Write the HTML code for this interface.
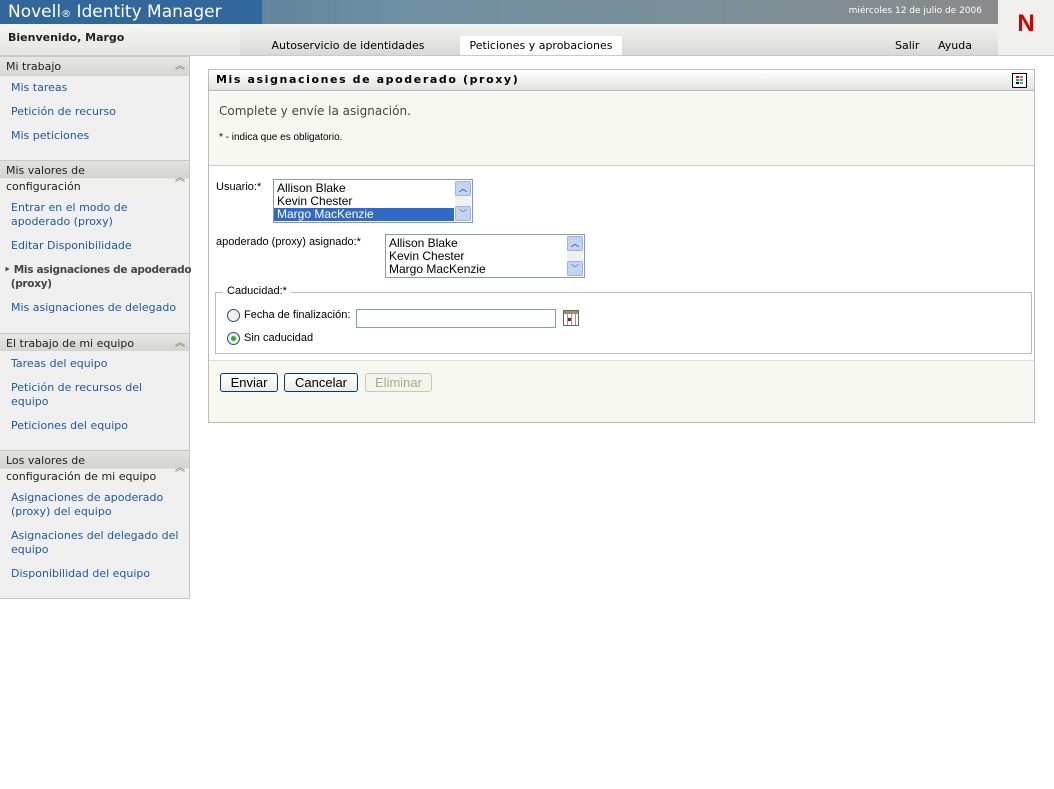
<!DOCTYPE html>
<html><head><meta charset="utf-8"><style>
*{margin:0;padding:0;box-sizing:border-box}
body{width:1054px;height:789px;background:#fff;font-family:"DejaVu Sans","Liberation Sans",sans-serif;font-size:11px;position:relative;overflow:hidden}
.abs{position:absolute}
#top{left:0;top:0;width:998px;height:24px;background:linear-gradient(90deg,#4a7090 0,#6f8fa3 40%,#7a8f99 70%,#8a8a8a 100%)}
#logo{left:0;top:0;width:262px;height:24px;background:#32679c;color:#fff;font-size:17px;padding:2px 8px;font-family:"DejaVu Sans",sans-serif}
#date{right:72px;top:6px;color:#fff;font-size:9px}
#bar{left:0;top:24px;width:998px;height:31px;background:linear-gradient(#f4f4f2,#d8d8d4)}
#nbox{left:998px;top:0;width:56px;height:55px;background:#efefed;color:#d40000;font-size:24px;font-weight:bold;text-align:center;padding-top:10px;font-family:"Liberation Sans",sans-serif}
.tab{top:36px;height:19px;font-size:11px;padding-top:3px;text-align:center}
#side{left:0;top:56px;width:190px;height:543px;background:#efefef;border-right:1px solid #c4c4c4;border-bottom:1px solid #c4c4c4}
.sh{position:absolute;left:0;width:189px;background:linear-gradient(#e8e8e6,#d4d4d0);border-top:1px solid #c8c8c8;color:#222;font-size:11px;padding:2px 6px;line-height:16px}
.sh i{position:absolute;right:4px;top:2px;font-style:normal;color:#777;font-size:10px}
.lk{position:absolute;left:11px;color:#1f5a9e;font-size:11px;line-height:14px;width:178px;white-space:nowrap}
#panel{left:208px;top:69px;width:827px;height:354px;border:1px solid #bbb}
#ph{height:21px;background:linear-gradient(#fff,#e2e2e0);border-bottom:1px solid #bbb;font-weight:bold;letter-spacing:1.6px;padding:3px 7px;font-size:11px}
.lb{font-family:"Liberation Sans",sans-serif;font-size:11px;color:#000}
.sel{position:absolute;border:1px solid #7f9db9;background:#fff;font-family:"Liberation Sans",sans-serif;font-size:12px;line-height:13px;padding-top:2px}
.sel div{padding-left:3px}
.sb{position:absolute;right:1px;top:1px;width:16px;bottom:1px;background:#f0f0ec}
.sb b,.sb u{position:absolute;left:0;width:16px;height:15px;background:#c4d3f4;border:1px solid #9fb4e0;border-radius:2px;font-size:8px;text-align:center;color:#4d6185;text-decoration:none;line-height:13px}
.btn{position:absolute;top:303px;height:19px;border:1px solid #003c74;border-radius:3px;background:linear-gradient(#fff,#ecebe6);font-family:"Liberation Sans",sans-serif;font-size:13px;text-align:center;line-height:17px}
</style></head><body>
<div id="top" class="abs"></div>
<div id="logo" class="abs">Novell<span style="font-size:10px">®</span> Identity Manager</div>
<div id="date" class="abs">miércoles 12 de julio de 2006</div>
<div id="bar" class="abs"></div>
<div class="abs" style="left:0;top:24px;width:240px;height:31px;background:linear-gradient(#f6f6f4,#e4e4e0)"></div>
<div class="abs" style="left:8px;top:31px;font-weight:bold;font-size:11px;color:#222">Bienvenido, Margo</div>
<div class="abs tab" style="left:262px;width:172px">Autoservicio de identidades</div>
<div class="abs tab" style="left:460px;width:162px;background:#fff">Peticiones y aprobaciones</div>
<div class="abs" style="left:895px;top:39px">Salir</div>
<div class="abs" style="left:938px;top:39px">Ayuda</div>
<div id="nbox" class="abs">N</div>
<div class="abs" style="left:0;top:55px;width:1054px;height:1px;background:#c8c8c8"></div>

<div id="side" class="abs">
<div class="sh" style="top:0;height:20px">Mi trabajo<i>︽</i></div>
<div class="lk" style="top:25px">Mis tareas</div>
<div class="lk" style="top:49px">Petición de recurso</div>
<div class="lk" style="top:73px">Mis peticiones</div>
<div class="sh" style="top:104px;height:36px;background:linear-gradient(#e2e2e0 0,#d2d2ce 50%,#efefed 50%)">Mis valores de<br>configuración<i style="top:10px">︽</i></div>
<div class="lk" style="top:145px">Entrar en el modo de<br>apoderado (proxy)</div>
<div class="lk" style="top:183px">Editar Disponibilidade</div>
<div class="lk" style="top:207px;color:#444;font-weight:bold;left:4px;font-size:10.5px;letter-spacing:-0.3px">‣ Mis asignaciones de apoderado<br>&nbsp;&nbsp;(proxy)</div>
<div class="lk" style="top:245px">Mis asignaciones de delegado</div>
<div class="sh" style="top:277px;height:18px">El trabajo de mi equipo<i>︽</i></div>
<div class="lk" style="top:301px">Tareas del equipo</div>
<div class="lk" style="top:325px">Petición de recursos del<br>equipo</div>
<div class="lk" style="top:363px">Peticiones del equipo</div>
<div class="sh" style="top:394px;height:36px;background:linear-gradient(#e2e2e0 0,#d2d2ce 50%,#efefed 50%)">Los valores de<br>configuración de mi equipo<i style="top:10px">︽</i></div>
<div class="lk" style="top:435px">Asignaciones de apoderado<br>(proxy) del equipo</div>
<div class="lk" style="top:473px">Asignaciones del delegado del<br>equipo</div>
<div class="lk" style="top:511px">Disponibilidad del equipo</div>
</div>

<div id="panel" class="abs">
<div id="ph">Mis asignaciones de apoderado (proxy)</div>
<div class="abs" style="right:7px;top:3px;width:15px;height:15px;border:1px solid #000;background:#fff"><svg width="13" height="13"><rect x="3" y="2" width="3" height="2" fill="#e00"/><rect x="3" y="5" width="3" height="2" fill="#0c0"/><rect x="3" y="8" width="3" height="2" fill="#00d"/><rect x="7" y="2" width="3" height="2" fill="#888"/><rect x="7" y="5" width="3" height="2" fill="#888"/><rect x="7" y="8" width="3" height="2" fill="#888"/></svg></div>
<div class="abs" style="left:0;top:22px;width:825px;height:74px;background:#f8f8f3;border-bottom:1px solid #ccc"></div>
<div class="abs" style="left:10px;top:34px;font-size:12px;color:#444">Complete y envíe la asignación.</div>
<div class="abs lb" style="left:10px;top:62px;font-size:10px">* - indica que es obligatorio.</div>
<div class="abs lb" style="left:7px;top:111px">Usuario:*</div>
<div class="sel" style="left:64px;top:109px;width:200px;height:44px"><div>Allison Blake</div><div>Kevin Chester</div><div style="background:#316ac5;color:#fff;margin-right:18px">Margo MacKenzie</div><div class="sb"><b style="top:0">︿</b><u style="bottom:0">﹀</u></div></div>
<div class="abs lb" style="left:7px;top:166px">apoderado (proxy) asignado:*</div>
<div class="sel" style="left:176px;top:164px;width:200px;height:44px"><div>Allison Blake</div><div>Kevin Chester</div><div>Margo MacKenzie</div><div class="sb"><b style="top:0">︿</b><u style="bottom:0">﹀</u></div></div>
<div class="abs" style="left:6px;top:222px;width:817px;height:62px;border:1px solid #bbb"></div>
<div class="abs lb" style="left:14px;top:215px;background:#fff;padding:0 4px">Caducidad:*</div>
<div class="abs" style="left:18px;top:239px;width:13px;height:13px;border:1px solid #1c5180;border-radius:50%;background:#f0f0ea"></div>
<div class="abs lb" style="left:35px;top:239px">Fecha de finalización:</div>
<div class="abs" style="left:147px;top:239px;width:200px;height:19px;border:1px solid #7f9db9"></div>
<div class="abs" style="left:354px;top:240px;width:16px;height:16px;border:1px solid #666;background:repeating-linear-gradient(90deg,#fff 0 3px,#999 3px 4px),#fff"><div style="height:3px;background:#a09060"></div><div style="position:absolute;left:4px;top:7px;width:3px;height:3px;background:#c00"></div></div>
<div class="abs" style="left:18px;top:262px;width:13px;height:13px;border:1px solid #1c5180;border-radius:50%;background:#f0f0ea"><div style="margin:3px;width:5px;height:5px;border-radius:50%;background:#2ab02a"></div></div>
<div class="abs lb" style="left:35px;top:262px">Sin caducidad</div>
<div class="abs" style="left:0;top:290px;width:825px;height:62px;background:#f8f8f3;border-top:1px solid #ddd"></div>
<div class="btn" style="left:11px;width:58px">Enviar</div>
<div class="btn" style="left:75px;width:74px">Cancelar</div>
<div class="btn" style="left:156px;width:67px;border-color:#c9c7ba;color:#aca899;background:#f5f4ea">Eliminar</div>
</div>
</body></html>
